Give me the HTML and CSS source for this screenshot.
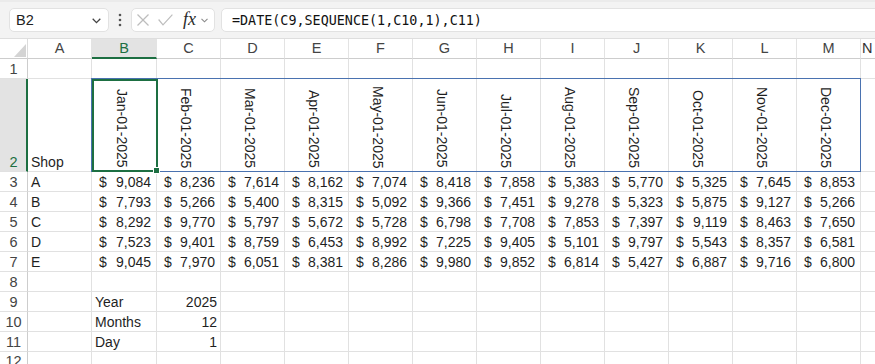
FILE: index.html
```html
<!DOCTYPE html>
<html>
<head>
<meta charset="utf-8">
<link rel="stylesheet" href="styles.css">
</head>
<body>
<div class="toolbar">
  <div class="namebox"><span>B2</span><svg class="chev" width="9" height="6" viewBox="0 0 9 6"><polyline points="0.7,0.8 4.5,4.6 8.3,0.8" fill="none" stroke="#444" stroke-width="1.3"/></svg></div>
  <div class="dots"><svg width="4" height="14" viewBox="0 0 4 14"><circle cx="2" cy="2" r="1.3" fill="#555"/><circle cx="2" cy="7" r="1.3" fill="#555"/><circle cx="2" cy="12" r="1.3" fill="#555"/></svg></div>
  <div class="fnbox">
    <svg class="ico" width="12" height="12" viewBox="0 0 12 12"><line x1="0.5" y1="0.5" x2="11.5" y2="11.5" stroke="#bdbdbd" stroke-width="1.2"/><line x1="11.5" y1="0.5" x2="0.5" y2="11.5" stroke="#bdbdbd" stroke-width="1.2"/></svg>
    <svg class="ico chk" width="15" height="12" viewBox="0 0 15 12"><polyline points="0.6,5.5 5,10.8 14.4,0.6" fill="none" stroke="#bdbdbd" stroke-width="1.2"/></svg>
    <span class="fx">fx</span>
    <svg class="ico small" width="7" height="5" viewBox="0 0 7 5"><polyline points="0.5,0.8 3.5,3.8 6.5,0.8" fill="none" stroke="#8a8a8a" stroke-width="1.1"/></svg>
  </div>
  <div class="formula">=DATE(C9,SEQUENCE(1,C10,1),C11)</div>
</div>
<div class="sheet">
  <div class="cell corner"><svg width="27" height="19" viewBox="0 0 27 19"><polygon points="14,18 26,18 26,5" fill="#d4d4d4"/></svg></div>
  <div class="cell hd">A</div>
  <div class="cell hd on">B</div>
  <div class="cell hd">C</div>
  <div class="cell hd">D</div>
  <div class="cell hd">E</div>
  <div class="cell hd">F</div>
  <div class="cell hd">G</div>
  <div class="cell hd">H</div>
  <div class="cell hd">I</div>
  <div class="cell hd">J</div>
  <div class="cell hd">K</div>
  <div class="cell hd">L</div>
  <div class="cell hd">M</div>
  <div class="cell hd last">N</div>

  <div class="cell rn">1</div>
  <div class="cell"></div><div class="cell"></div><div class="cell"></div><div class="cell"></div><div class="cell"></div><div class="cell"></div><div class="cell"></div><div class="cell"></div><div class="cell"></div><div class="cell"></div><div class="cell"></div><div class="cell"></div><div class="cell"></div><div class="cell"></div>

  <div class="cell rn on">2</div>
  <div class="cell">Shop</div>
  <div class="cell dt active"><span>Jan-01-2025</span><div class="spill"></div><div class="sel"><div class="handle"></div></div></div>
  <div class="cell dt"><span>Feb-01-2025</span></div>
  <div class="cell dt"><span>Mar-01-2025</span></div>
  <div class="cell dt"><span>Apr-01-2025</span></div>
  <div class="cell dt"><span>May-01-2025</span></div>
  <div class="cell dt"><span>Jun-01-2025</span></div>
  <div class="cell dt"><span>Jul-01-2025</span></div>
  <div class="cell dt"><span>Aug-01-2025</span></div>
  <div class="cell dt"><span>Sep-01-2025</span></div>
  <div class="cell dt"><span>Oct-01-2025</span></div>
  <div class="cell dt"><span>Nov-01-2025</span></div>
  <div class="cell dt"><span>Dec-01-2025</span></div>
  <div class="cell"></div>

  <div class="cell rn">3</div>
  <div class="cell">A</div>
  <div class="cell acc"><span>$</span><span>9,084</span></div>
  <div class="cell acc"><span>$</span><span>8,236</span></div>
  <div class="cell acc"><span>$</span><span>7,614</span></div>
  <div class="cell acc"><span>$</span><span>8,162</span></div>
  <div class="cell acc"><span>$</span><span>7,074</span></div>
  <div class="cell acc"><span>$</span><span>8,418</span></div>
  <div class="cell acc"><span>$</span><span>7,858</span></div>
  <div class="cell acc"><span>$</span><span>5,383</span></div>
  <div class="cell acc"><span>$</span><span>5,770</span></div>
  <div class="cell acc"><span>$</span><span>5,325</span></div>
  <div class="cell acc"><span>$</span><span>7,645</span></div>
  <div class="cell acc"><span>$</span><span>8,853</span></div>
  <div class="cell"></div>

  <div class="cell rn">4</div>
  <div class="cell">B</div>
  <div class="cell acc"><span>$</span><span>7,793</span></div>
  <div class="cell acc"><span>$</span><span>5,266</span></div>
  <div class="cell acc"><span>$</span><span>5,400</span></div>
  <div class="cell acc"><span>$</span><span>8,315</span></div>
  <div class="cell acc"><span>$</span><span>5,092</span></div>
  <div class="cell acc"><span>$</span><span>9,366</span></div>
  <div class="cell acc"><span>$</span><span>7,451</span></div>
  <div class="cell acc"><span>$</span><span>9,278</span></div>
  <div class="cell acc"><span>$</span><span>5,323</span></div>
  <div class="cell acc"><span>$</span><span>5,875</span></div>
  <div class="cell acc"><span>$</span><span>9,127</span></div>
  <div class="cell acc"><span>$</span><span>5,266</span></div>
  <div class="cell"></div>

  <div class="cell rn">5</div>
  <div class="cell">C</div>
  <div class="cell acc"><span>$</span><span>8,292</span></div>
  <div class="cell acc"><span>$</span><span>9,770</span></div>
  <div class="cell acc"><span>$</span><span>5,797</span></div>
  <div class="cell acc"><span>$</span><span>5,672</span></div>
  <div class="cell acc"><span>$</span><span>5,728</span></div>
  <div class="cell acc"><span>$</span><span>6,798</span></div>
  <div class="cell acc"><span>$</span><span>7,708</span></div>
  <div class="cell acc"><span>$</span><span>7,853</span></div>
  <div class="cell acc"><span>$</span><span>7,397</span></div>
  <div class="cell acc"><span>$</span><span>9,119</span></div>
  <div class="cell acc"><span>$</span><span>8,463</span></div>
  <div class="cell acc"><span>$</span><span>7,650</span></div>
  <div class="cell"></div>

  <div class="cell rn">6</div>
  <div class="cell">D</div>
  <div class="cell acc"><span>$</span><span>7,523</span></div>
  <div class="cell acc"><span>$</span><span>9,401</span></div>
  <div class="cell acc"><span>$</span><span>8,759</span></div>
  <div class="cell acc"><span>$</span><span>6,453</span></div>
  <div class="cell acc"><span>$</span><span>8,992</span></div>
  <div class="cell acc"><span>$</span><span>7,225</span></div>
  <div class="cell acc"><span>$</span><span>9,405</span></div>
  <div class="cell acc"><span>$</span><span>5,101</span></div>
  <div class="cell acc"><span>$</span><span>9,797</span></div>
  <div class="cell acc"><span>$</span><span>5,543</span></div>
  <div class="cell acc"><span>$</span><span>8,357</span></div>
  <div class="cell acc"><span>$</span><span>6,581</span></div>
  <div class="cell"></div>

  <div class="cell rn">7</div>
  <div class="cell">E</div>
  <div class="cell acc"><span>$</span><span>9,045</span></div>
  <div class="cell acc"><span>$</span><span>7,970</span></div>
  <div class="cell acc"><span>$</span><span>6,051</span></div>
  <div class="cell acc"><span>$</span><span>8,381</span></div>
  <div class="cell acc"><span>$</span><span>8,286</span></div>
  <div class="cell acc"><span>$</span><span>9,980</span></div>
  <div class="cell acc"><span>$</span><span>9,852</span></div>
  <div class="cell acc"><span>$</span><span>6,814</span></div>
  <div class="cell acc"><span>$</span><span>5,427</span></div>
  <div class="cell acc"><span>$</span><span>6,887</span></div>
  <div class="cell acc"><span>$</span><span>9,716</span></div>
  <div class="cell acc"><span>$</span><span>6,800</span></div>
  <div class="cell"></div>

  <div class="cell rn">8</div>
  <div class="cell"></div><div class="cell"></div><div class="cell"></div><div class="cell"></div><div class="cell"></div><div class="cell"></div><div class="cell"></div><div class="cell"></div><div class="cell"></div><div class="cell"></div><div class="cell"></div><div class="cell"></div><div class="cell"></div><div class="cell"></div>

  <div class="cell rn">9</div>
  <div class="cell"></div>
  <div class="cell">Year</div>
  <div class="cell r">2025</div>
  <div class="cell"></div><div class="cell"></div><div class="cell"></div><div class="cell"></div><div class="cell"></div><div class="cell"></div><div class="cell"></div><div class="cell"></div><div class="cell"></div><div class="cell"></div><div class="cell"></div>

  <div class="cell rn">10</div>
  <div class="cell"></div>
  <div class="cell">Months</div>
  <div class="cell r">12</div>
  <div class="cell"></div><div class="cell"></div><div class="cell"></div><div class="cell"></div><div class="cell"></div><div class="cell"></div><div class="cell"></div><div class="cell"></div><div class="cell"></div><div class="cell"></div><div class="cell"></div>

  <div class="cell rn">11</div>
  <div class="cell"></div>
  <div class="cell">Day</div>
  <div class="cell r">1</div>
  <div class="cell"></div><div class="cell"></div><div class="cell"></div><div class="cell"></div><div class="cell"></div><div class="cell"></div><div class="cell"></div><div class="cell"></div><div class="cell"></div><div class="cell"></div><div class="cell"></div>

  <div class="cell rn top">12</div>
  <div class="cell"></div><div class="cell"></div><div class="cell"></div><div class="cell"></div><div class="cell"></div><div class="cell"></div><div class="cell"></div><div class="cell"></div><div class="cell"></div><div class="cell"></div><div class="cell"></div><div class="cell"></div><div class="cell"></div><div class="cell"></div>
</div>
</body>
</html>
```

FILE: styles.css
```css
* { box-sizing: border-box; }
html, body { margin: 0; padding: 0; background: #fff; overflow: hidden; }
body {
  width: 875px;
  height: 364px;
  font-family: "Liberation Sans", Arial, sans-serif;
  font-size: 14px;
  color: #1f1f1f;
}

.toolbar {
  height: 39px;
  background: #f3f3f3;
  border-top: 2px solid #ebebeb;
  border-bottom: 1px solid #dedede;
  display: flex;
  align-items: flex-start;
  padding: 6px 0 0 9px;
  overflow: hidden;
}
.namebox {
  width: 100px;
  height: 24px;
  flex: none;
  background: #fff;
  border: 1px solid #e2e2e2;
  border-radius: 5px;
  display: flex;
  align-items: center;
  justify-content: space-between;
  padding: 0 7px 0 6px;
  font-size: 14.5px;
  color: #222;
}
.namebox .chev { margin-top: 1px; }
.dots {
  width: 22px;
  height: 24px;
  flex: none;
  display: flex;
  align-items: center;
  justify-content: center;
}
.fnbox {
  width: 84px;
  height: 24px;
  flex: none;
  background: #fff;
  border: 1px solid #e2e2e2;
  border-radius: 5px;
  display: flex;
  align-items: center;
  padding-left: 5px;
}
.ico { display: block; flex: none; }
.chk { margin-left: 9px; }
.fx {
  margin-left: 10px;
  font-family: "Liberation Serif", "Times New Roman", serif;
  font-style: italic;
  font-size: 18px;
  color: #2a2a2a;
  line-height: 1;
  margin-top: -2px;
}
.small { margin-left: 5px; margin-top: 1px; }
.formula {
  flex: 1;
  height: 24px;
  margin-left: 6px;
  margin-right: -8px;
  background: #fff;
  border: 1px solid #e2e2e2;
  border-radius: 5px;
  display: flex;
  align-items: center;
  padding-left: 10px;
  font-family: "DejaVu Sans Mono", "Liberation Mono", monospace;
  font-size: 13.4px;
  color: #111;
}

.sheet {
  display: grid;
  grid-template-columns: 28px 64px 65px repeat(11, 64px) 20px;
  grid-template-rows: 20px 20px 93px repeat(10, 20px);
}
.cell {
  position: relative;
  border-right: 1px solid #e1e1e1;
  border-bottom: 1px solid #e1e1e1;
  display: flex;
  align-items: flex-end;
  padding: 0 3px;
  line-height: 18px;
  white-space: nowrap;
}
.corner {
  display: block;
  padding: 0;
  border-bottom-color: #cdcdcd;
  border-right-color: #dcdcdc;
}
.corner svg { display: block; }
.hd {
  align-items: center;
  justify-content: center;
  color: #444;
  border-bottom-color: #cdcdcd;
  border-right-color: #e3e3e3;
  line-height: 19px;
  font-size: 14.5px;
}
.hd.on {
  background: #e3e3e3;
  color: #1d6f42;
  border-bottom: 2px solid #1d6f42;
  padding-top: 1px;
}
.hd.last { justify-content: flex-start; padding-left: 1px; color: #333; }
.rn {
  justify-content: center;
  color: #444;
  border-right-color: #cdcdcd;
  padding: 0;
  font-size: 14.5px;
}
.rn.on {
  background: #e3e3e3;
  color: #1d6f42;
  border-right: 2px solid #1d6f42;
  padding-left: 1px;
}
.rn.top { align-items: flex-start; }
.acc { justify-content: space-between; padding: 0 5px 0 7px; }
.r { justify-content: flex-end; }
.dt { justify-content: center; padding: 0 5px 3px 0; }
.dt span { writing-mode: vertical-rl; line-height: 16px; display: block; }

.spill {
  position: absolute;
  left: -1px;
  top: -1px;
  width: 770px;
  height: 94px;
  border: 1px solid #4a72b0;
  z-index: 2;
  pointer-events: none;
}
.sel {
  position: absolute;
  left: 0;
  top: 0;
  width: 66px;
  height: 93px;
  border: 2px solid #1d6f42;
  z-index: 3;
}
.handle {
  position: absolute;
  right: -4px;
  bottom: -4px;
  width: 7px;
  height: 7px;
  background: #1d6f42;
  border: 1px solid #fff;
}
```
